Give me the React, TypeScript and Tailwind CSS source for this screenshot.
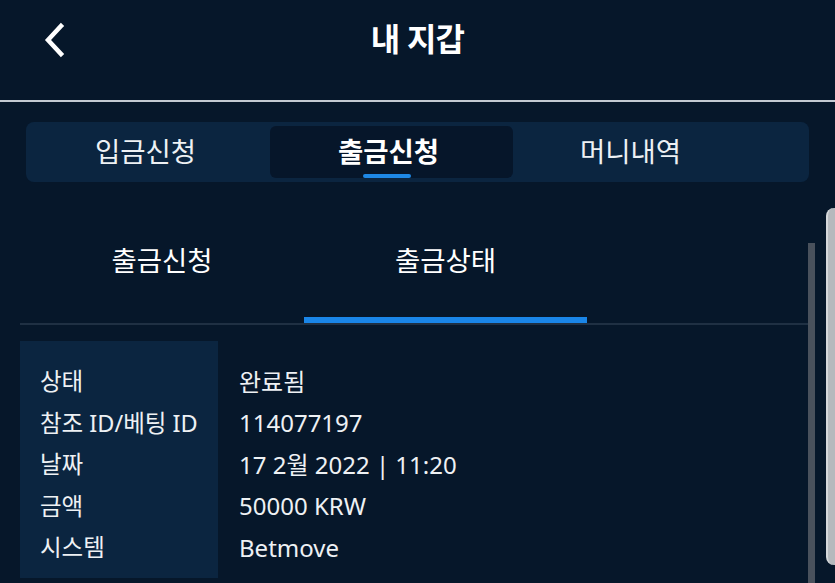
import React from "react";

const font = { fontFamily: '"Noto Sans", "Noto Sans CJK KR", sans-serif' };

const rows: [string, string][] = [
  ["상태", "완료됨"],
  ["참조 ID/베팅 ID", "114077197"],
  ["날짜", "17 2월 2022 | 11:20"],
  ["금액", "50000 KRW"],
  ["시스템", "Betmove"],
];

export default function App() {
  return (
    <div
      className="relative w-[835px] h-[583px] overflow-hidden bg-[#06172a] text-white"
      style={font}
    >
      {/* header */}
      <div className="relative flex h-[102px] items-center justify-center border-b-2 border-[#c3cad2] pb-[22px]">
        <button className="absolute left-[35px] top-[16px] p-1">
          <svg width="30" height="40" viewBox="0 0 30 40" fill="none">
            <polyline
              points="22,6 9,20 22,34"
              stroke="white"
              strokeWidth="4.5"
              strokeLinecap="square"
            />
          </svg>
        </button>
        <h1 className="text-[32px] font-bold tracking-tight">내 지갑</h1>
      </div>

      {/* main tabs */}
      <div className="mx-[26px] mt-[20px] flex h-[60px] items-center rounded-lg bg-[#0b2540] px-[1px]">
        <div className="flex h-[52px] w-[243px] items-center justify-center pr-[6px] text-[27.5px] text-[#eef1f4]">
          입금신청
        </div>
        <div className="relative flex h-[52px] w-[243px] items-center justify-center rounded-md bg-[#06162a] pr-[6px] text-[27.5px] font-bold">
          출금신청
          <span className="absolute bottom-0 left-[93px] h-[4px] w-[48px] rounded-full bg-[#1e88e5]" />
        </div>
        <div className="flex h-[52px] w-[243px] items-center justify-center pr-[8px] text-[27.5px] text-[#eef1f4]">
          머니내역
        </div>
      </div>

      {/* sub tabs */}
      <div className="mx-[20px] mt-[23px] flex border-b-2 border-[#1f3043]">
        <div className="flex h-[118px] w-[284px] items-center justify-center border-b-[6px] border-transparent text-[27.5px]">
          출금신청
        </div>
        <div className="flex h-[118px] w-[283px] items-center justify-center border-b-[6px] border-[#1a86e8] text-[27.5px]">
          출금상태
        </div>
      </div>

      {/* details */}
      <div className="mx-[20px] mt-[16px] flex w-[770px]">
        <div className="w-[198px] bg-[#0b2540] pb-[9px] pl-[20px] pt-[20px]">
          {rows.map(([k]) => (
            <div key={k} className="flex h-[41.5px] items-center text-[23.5px] text-[#eef1f4]">
              {k}
            </div>
          ))}
        </div>
        <div className="pl-[21px] pt-[20px]">
          {rows.map(([k, v]) => (
            <div key={k} className="flex h-[41.5px] items-center text-[24px] text-[#eef1f4]">
              {v}
            </div>
          ))}
        </div>
      </div>

      {/* scrollbar + side panel */}
      <div className="absolute left-[808px] top-[243px] h-[340px] w-[7px] bg-[#49515c]" />
      <div className="absolute left-[826px] top-[208px] h-[357px] w-[12px] rounded-l-lg border-l-2 border-[#d5d8db] bg-[#b5b9bd]" />
    </div>
  );
}
